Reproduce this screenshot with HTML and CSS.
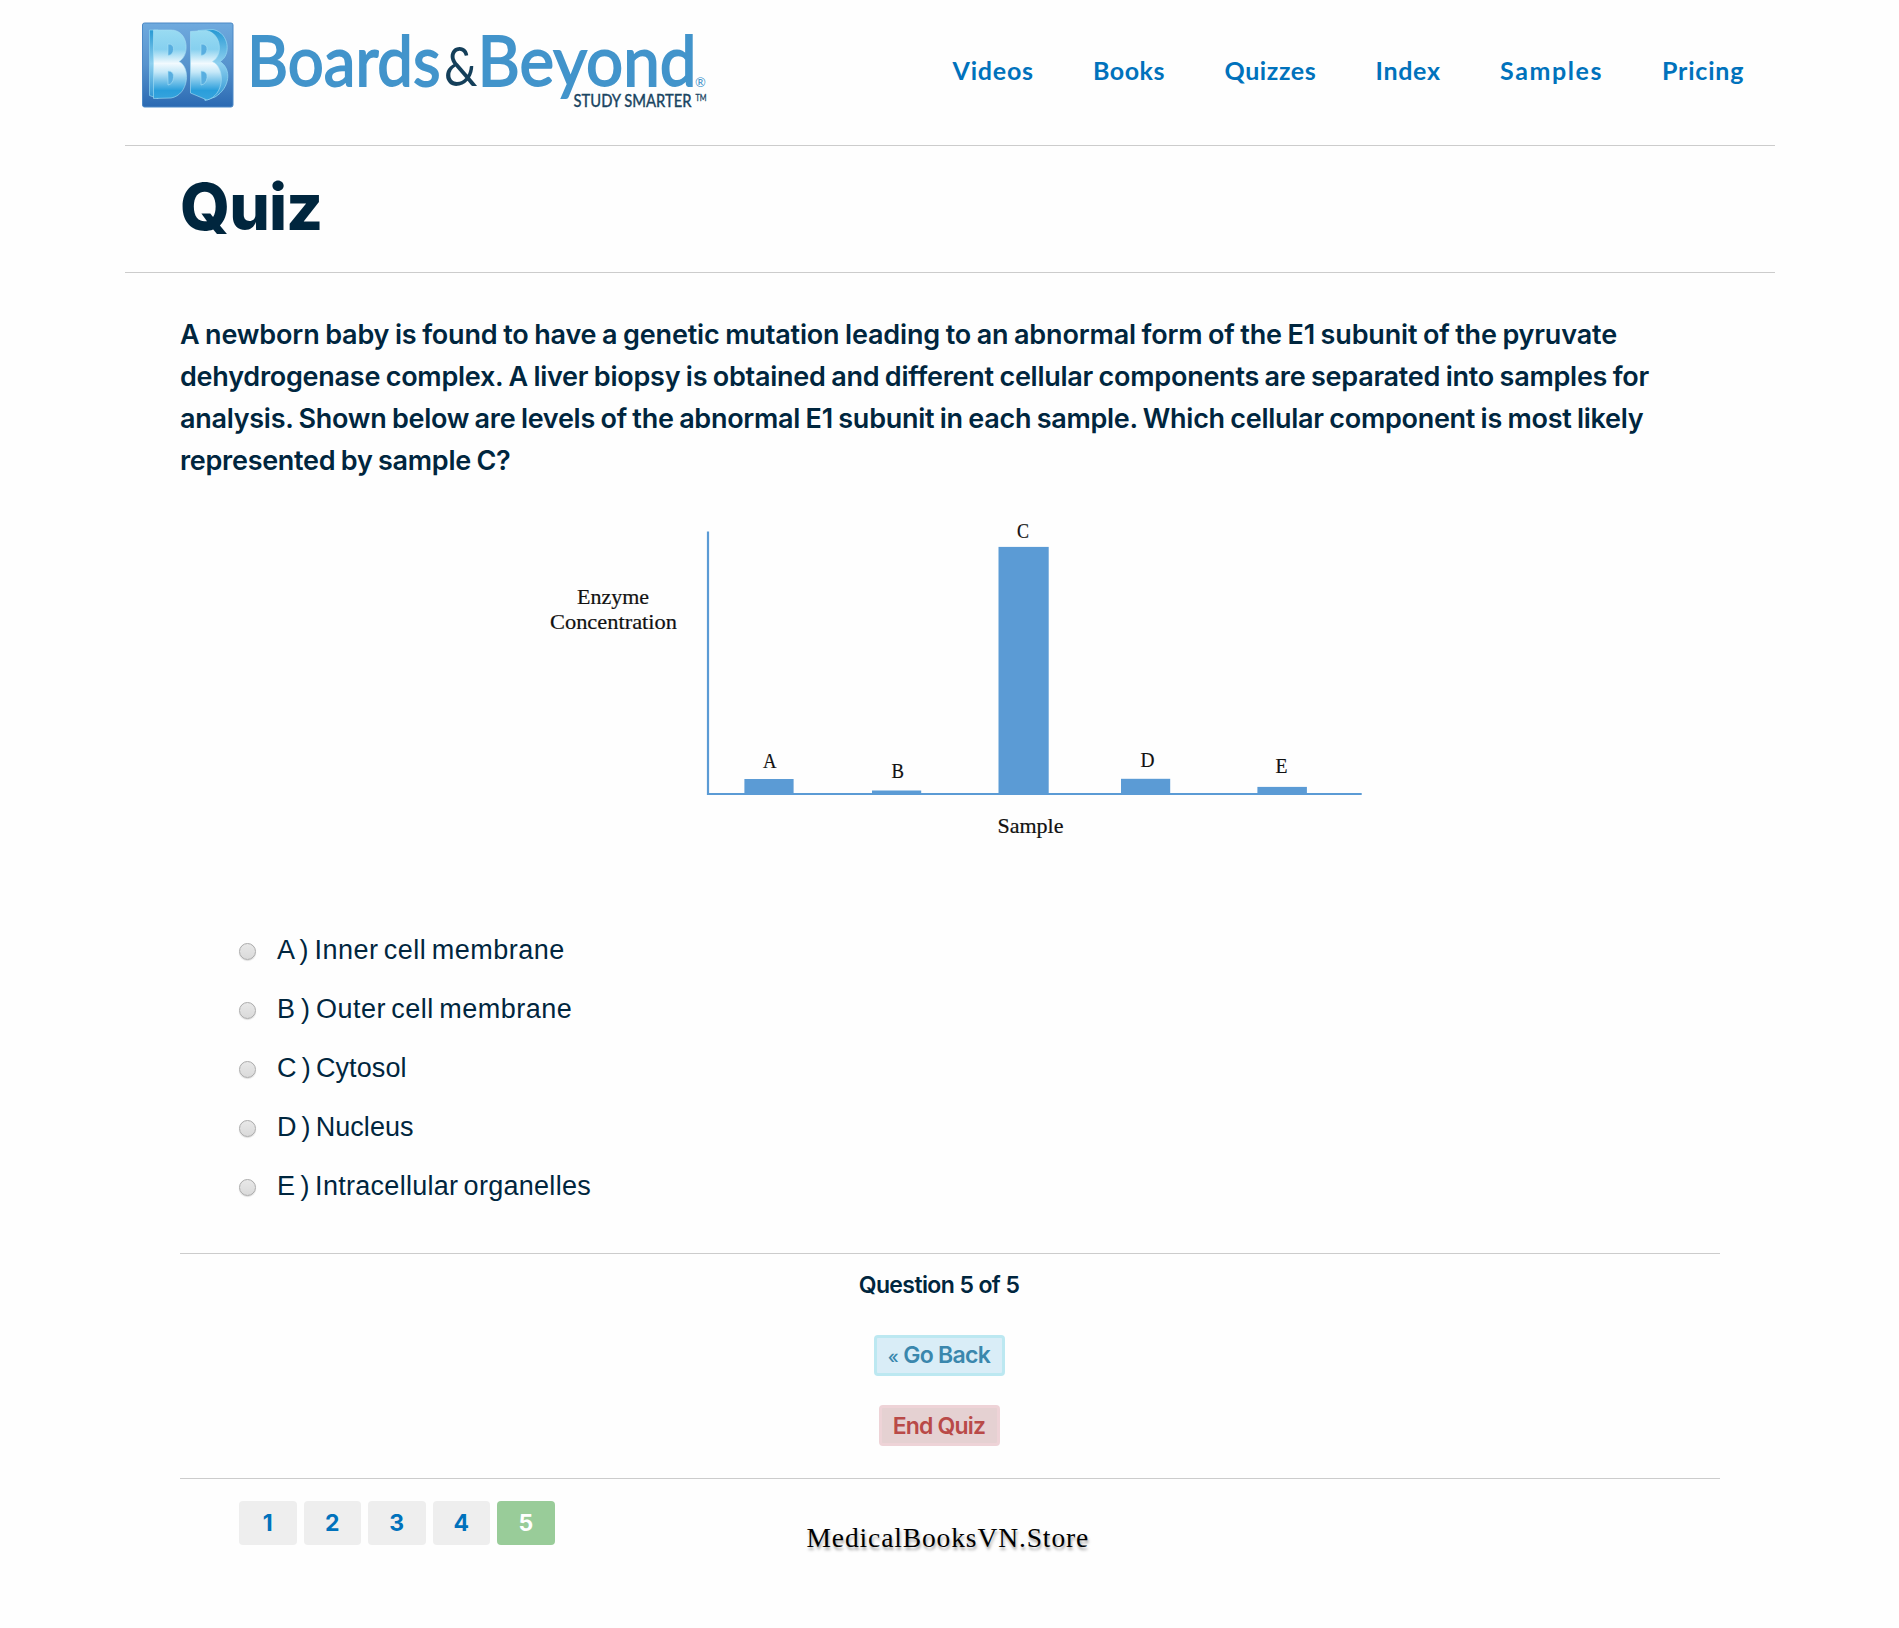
FILE: index.html
```
<!DOCTYPE html>
<html lang="en">
<head>
<meta charset="utf-8">
<title>Quiz - Boards &amp; Beyond</title>
<link rel="stylesheet" href="styles.css">
</head>
<body>
<div class="page">
  <header class="header">
    <svg class="logo" width="600" height="110" viewBox="120 10 600 110" role="img" aria-label="Boards and Beyond">
      <defs>
        <linearGradient id="tile" x1="0" y1="0" x2="0" y2="1">
          <stop offset="0" stop-color="#6faade"/><stop offset=".5" stop-color="#5793cd"/><stop offset="1" stop-color="#2a69b2"/>
        </linearGradient>
        <linearGradient id="face" gradientUnits="userSpaceOnUse" x1="0" y1="28" x2="0" y2="99">
          <stop offset="0" stop-color="#9bdcf2"/><stop offset=".3" stop-color="#86d0ef"/><stop offset=".5" stop-color="#f2fafe"/><stop offset=".62" stop-color="#c5e8f8"/><stop offset=".88" stop-color="#2a9edb"/><stop offset="1" stop-color="#36a3dd"/>
        </linearGradient>
        <linearGradient id="side" gradientUnits="userSpaceOnUse" x1="0" y1="28" x2="0" y2="99">
          <stop offset="0" stop-color="#2196d2"/><stop offset=".5" stop-color="#8fd0ef"/><stop offset="1" stop-color="#2b94d3"/>
        </linearGradient>
      </defs>
      <rect x="142.500" y="23" width="90.500" height="84" rx="2" fill="url(#tile)" stroke="#4c89c6"/>
      <path d="M149.500 30H158V98.500L149.500 95.500Z" fill="url(#side)" stroke="#8fd6f1" stroke-width=".7"/>
      <path d="M198 30.500L213 29.500C230 33 231 56 220 61.500C232 69 230 88 215 97L205 100.500Z" fill="url(#side)" stroke="#8fd6f1" stroke-width=".8"/>
      <path d="M166 43H175V57H166ZM166 69H175V86H166ZM197 43H209V57H197ZM197 69H209V86H197Z" fill="#58aee0"/>
      <g fill="url(#face)" fill-rule="evenodd" stroke="#a9e0f5" stroke-width=".6">
        <path d="M153.500 30H171C189 30 190 56 179 61.500C191 67 189 95 171 98L153.500 98.500ZM168 44V55.500Q173 55 173.500 49.500T168 44ZM168 71V85Q173 84 173.500 77.500T168 71Z"/>
        <path d="M190.500 31.500L206 30.500C222 33 223 56 212.500 61.500C226 68 224 96 207 100L190.500 93ZM201 44V55.500Q206.500 55 207 49.500T201 44ZM201 71V85Q206.500 84 207 77.500T201 71Z"/>
      </g>
      <g class="logo-name">
        <text x="247" y="85.700" textLength="193.500" lengthAdjust="spacingAndGlyphs">Boards</text>
        <text class="logo-amp" x="444" y="85.700" textLength="33.500" lengthAdjust="spacingAndGlyphs">&amp;</text>
        <text x="477.500" y="85.700" textLength="219" lengthAdjust="spacingAndGlyphs">Beyond</text>
      </g>
      <text class="logo-reg" x="695" y="87">®</text>
      <text class="logo-tag" x="573.500" y="107" textLength="118" lengthAdjust="spacingAndGlyphs">STUDY SMARTER</text>
      <text class="logo-tm" x="695.500" y="101" textLength="11" lengthAdjust="spacingAndGlyphs">TM</text>
    </svg>
    <nav class="nav">
      <a class="w1">Videos</a><a class="w2">Books</a><a class="w3">Quizzes</a><a class="w4">Index</a><a class="w5">Samples</a><a class="w6">Pricing</a>
    </nav>
  </header>
  <div class="title"><h1>Quiz</h1></div>
  <main class="content">
    <p class="question">
      <span class="l1">A newborn baby is found to have a genetic mutation leading to an abnormal form of the E1 subunit of the pyruvate</span>
      <span class="l2">dehydrogenase complex. A liver biopsy is obtained and different cellular components are separated into samples for</span>
      <span class="l3">analysis. Shown below are levels of the abnormal E1 subunit in each sample. Which cellular component is most likely</span>
      <span class="l4">represented by sample C?</span>
    </p>
    <svg class="chart" width="850" height="340" viewBox="530 510.500 850 340">
      <g fill="#5b9bd5">
        <rect x="744.400" y="779.500" width="49.200" height="15.500"/>
        <rect x="872" y="791" width="49.200" height="4"/>
        <rect x="998.500" y="547.400" width="50.200" height="247.600"/>
        <rect x="1121" y="779.300" width="49.200" height="15.700"/>
        <rect x="1257.400" y="787.400" width="49.500" height="7.600"/>
      </g>
      <path d="M708 532V794.500H1361.700" fill="none" stroke="#5b9bd5" stroke-width="2.200"/>
      <g class="chart-label">
        <text x="763" y="768.500" textLength="13.500" lengthAdjust="spacingAndGlyphs">A</text>
        <text x="891.500" y="778" textLength="12.500" lengthAdjust="spacingAndGlyphs">B</text>
        <text x="1017" y="538" textLength="12" lengthAdjust="spacingAndGlyphs">C</text>
        <text x="1140.500" y="767" textLength="14" lengthAdjust="spacingAndGlyphs">D</text>
        <text x="1275.500" y="773" textLength="12" lengthAdjust="spacingAndGlyphs">E</text>
        <text x="577" y="604" textLength="72" lengthAdjust="spacingAndGlyphs">Enzyme</text>
        <text x="550" y="629" textLength="127" lengthAdjust="spacingAndGlyphs">Concentration</text>
        <text x="997.500" y="833.500" textLength="66" lengthAdjust="spacingAndGlyphs">Sample</text>
      </g>
    </svg>
    <div class="options">
      <label><input type="radio" name="answer"><span class="o1">A ) Inner cell membrane</span></label>
      <label><input type="radio" name="answer"><span class="o2">B ) Outer cell membrane</span></label>
      <label><input type="radio" name="answer"><span class="o3">C ) Cytosol</span></label>
      <label><input type="radio" name="answer"><span class="o4">D ) Nucleus</span></label>
      <label><input type="radio" name="answer"><span class="o5">E ) Intracellular organelles</span></label>
    </div>
    <section class="actions">
      <div class="progress">Question 5 of 5</div>
      <button class="btn back"><span class="laquo">«</span>Go Back</button>
      <button class="btn end">End Quiz</button>
    </section>
    <footer class="footer">
      <div class="pages"><a>1</a><a>2</a><a>3</a><a>4</a><a class="current">5</a></div>
      <div class="store">MedicalBooksVN.Store</div>
    </footer>
  </main>
</div>
</body>
</html>
```
FILE: styles.css
```
* { box-sizing: border-box; }
body { margin: 0; background: #fefefe; color: #00263e; font-family: Inter, sans-serif; }
.page { width: 1650px; margin-left: 125px; }

.header { display: flex; height: 146px; border-bottom: 1px solid #ccc; }
.logo { display: block; flex: none; margin: 10px 0 0 -5px; }
.logo-name { font: 400 70px Lato, sans-serif; fill: #4294cb; stroke: #4294cb; stroke-width: 1.800px; }
.logo-amp { font-size: 54px; fill: #143f5a; stroke: none; }
.logo-reg { font: 13px Lato, sans-serif; fill: #4294cb; }
.logo-tag { font: 500 17px Lato, sans-serif; fill: #1c4663; stroke: #1c4663; stroke-width: .3px; }
.logo-tm { font: 8.500px Lato, sans-serif; fill: #1c4663; stroke: #1c4663; stroke-width: .3px; }

.nav { display: grid; grid-template-columns: 140.500px 131.500px 151px 124.500px 162px 100px; margin: 50px 0 0 232.500px; height: 40px; font: 700 25px/40px Lato, sans-serif; color: #0072bc; white-space: nowrap; }
.w1 { letter-spacing: .800px; }
.w2 { letter-spacing: .500px; }
.w3 { letter-spacing: .600px; }
.w4 { letter-spacing: .700px; }
.w5 { letter-spacing: 1.600px; }
.w6 { letter-spacing: .800px; }

.title { height: 127px; padding: 22px 0 0 55px; border-bottom: 1px solid #ccc; }
h1 { margin: 0; font-size: 64px; font-weight: 800; line-height: 78px; letter-spacing: -.900px; }

.content { padding: 40.500px 55px 0; }
.question { margin: 0; font-size: 27px; font-weight: 600; line-height: 42px; white-space: nowrap; word-spacing: -1px; }
.question span { display: block; }
.l1 { letter-spacing: -.165px; }
.l2 { letter-spacing: -.250px; }
.l3 { letter-spacing: -.280px; }
.l4 { letter-spacing: -.280px; }
.chart { display: block; margin: 28.500px 0 0 350px; }
.chart-label { font: 21px "Liberation Serif", serif; fill: #111; stroke: #111; stroke-width: .2px; }

.options { padding: 71px 0 0 59px; font: 27px/59px "Liberation Sans", sans-serif; }
.options label { display: flex; align-items: center; height: 59px; gap: 21px; word-spacing: -2.500px; }
.options input { appearance: none; width: 17px; height: 17px; margin: 1px 0 0; border: 1px solid #aaa; border-radius: 50%; background: linear-gradient(#e8e8e8, #dadada); box-shadow: 0 1px 1px #ddd; }
.o1, .o2 { letter-spacing: .480px; }
.o3 { letter-spacing: .100px; }
.o4 { letter-spacing: .050px; }
.o5 { letter-spacing: .280px; }

.actions { display: flex; flex-direction: column; align-items: center; height: 226px; margin-top: 37px; padding: 16px 22px 0 0; border-top: 1px solid #ccc; border-bottom: 1px solid #ccc; }
.progress { font-size: 23px; font-weight: 600; line-height: 30px; letter-spacing: -.600px; }
.btn { height: 41px; padding: 0; border: 3px solid; border-radius: 4px; font: 600 23px/34px Inter, sans-serif; }
.back { width: 131px; margin-top: 35px; letter-spacing: -.700px; color: #3a87ad; background: #d9edf7; border-color: #bce8f1; }
.laquo { margin-right: 5px; font-size: 18px; font-weight: 500; }
.end { width: 121px; margin-top: 29px; letter-spacing: -.820px; color: #b94a48; background: #e5d1d2; border-color: #eed3d7; }

.footer { display: flex; padding: 22px 0 0 59px; }
.pages { display: flex; gap: 7px; }
.pages a { width: 57.500px; height: 44px; border-radius: 4px; background: #eee; color: #0072bc; text-align: center; font: 700 23px/44px Inter, sans-serif; }
.pages .current { background: #9c9; color: #fff; }
.store { margin: 17px 0 0 252px; color: #000; font: 27.500px/40px "Liberation Serif", serif; letter-spacing: .880px; text-shadow: 1px 3px 3px rgba(0,0,0,.35); }
```
